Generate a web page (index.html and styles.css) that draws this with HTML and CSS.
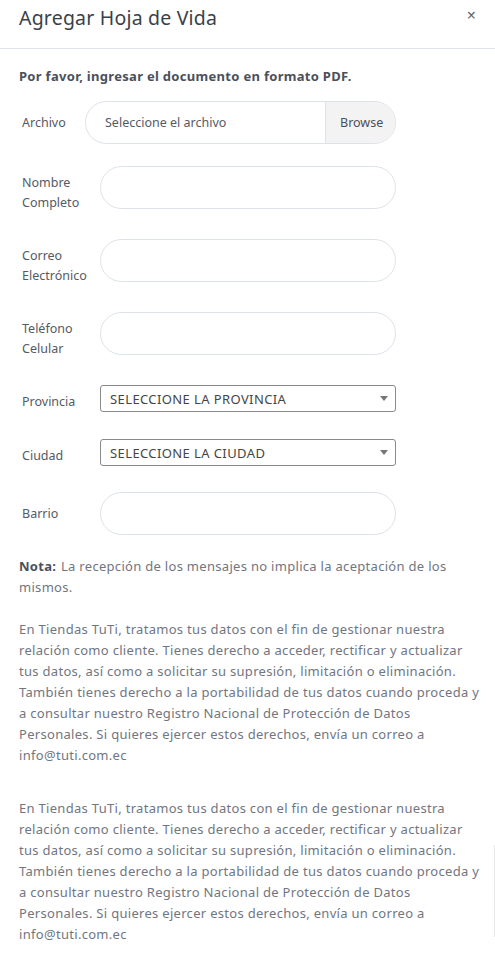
FILE: index.html
```html
<!DOCTYPE html>
<html lang="es">
<head>
<meta charset="utf-8">
<title>Agregar Hoja de Vida</title>
<link rel="stylesheet" href="styles.css">
</head>
<body>
<div class="modal">
  <div class="modal-header">
    <h1 class="modal-title">Agregar Hoja de Vida</h1>
    <span class="close">×</span>
  </div>
  <div class="modal-body">
    <p class="intro">Por favor, ingresar el documento en formato PDF.</p>

    <div class="row row-file">
      <label class="lbl lbl-file">Archivo</label>
      <div class="file-group">
        <span class="file-text">Seleccione el archivo</span>
        <span class="file-btn">Browse</span>
      </div>
    </div>

    <div class="row">
      <label class="lbl lbl-2">Nombre<br>Completo</label>
      <div class="pill"></div>
    </div>

    <div class="row">
      <label class="lbl lbl-2">Correo<br>Electrónico</label>
      <div class="pill"></div>
    </div>

    <div class="row">
      <label class="lbl lbl-2">Teléfono<br>Celular</label>
      <div class="pill"></div>
    </div>

    <div class="row row-select">
      <label class="lbl lbl-sel">Provincia</label>
      <div class="select"><span>SELECCIONE LA PROVINCIA</span><span class="caret"></span></div>
    </div>

    <div class="row row-select row-select-last">
      <label class="lbl lbl-sel">Ciudad</label>
      <div class="select"><span>SELECCIONE LA CIUDAD</span><span class="caret"></span></div>
    </div>

    <div class="row row-last">
      <label class="lbl">Barrio</label>
      <div class="pill"></div>
    </div>

    <p class="text nota"><strong class="nota-key">Nota:</strong> La recepción de los mensajes no implica la aceptación de los mismos.</p>

    <p class="text">En Tiendas TuTi, tratamos tus datos con el fin de gestionar nuestra relación como cliente. Tienes derecho a acceder, rectificar y actualizar tus datos, así como a solicitar su supresión, limitación o eliminación. También tienes derecho a la portabilidad de tus datos cuando proceda y a consultar nuestro Registro Nacional de Protección de Datos Personales. Si quieres ejercer estos derechos, envía un correo a info@tuti.com.ec</p>

    <p class="text text-second">En Tiendas TuTi, tratamos tus datos con el fin de gestionar nuestra relación como cliente. Tienes derecho a acceder, rectificar y actualizar tus datos, así como a solicitar su supresión, limitación o eliminación. También tienes derecho a la portabilidad de tus datos cuando proceda y a consultar nuestro Registro Nacional de Protección de Datos Personales. Si quieres ejercer estos derechos, envía un correo a info@tuti.com.ec</p>
  </div>
  <div class="edge"></div>
</div>
</body>
</html>
```
FILE: styles.css
```css
* { box-sizing: border-box; }
html, body { margin: 0; padding: 0; background: #fff; }
body {
  font-family: "Noto Sans", "Open Sans", sans-serif;
  color: #5a5f69;
  width: 495px;
  overflow: hidden;
}
.modal { position: relative; }
.modal-header {
  height: 49px;
  border-bottom: 1px solid #dfe3ea;
  display: flex;
  align-items: flex-start;
  justify-content: space-between;
  padding: 5px 19px 0 19px;
}
.modal-title {
  margin: 0;
  font-size: 19.5px;
  font-weight: 400;
  color: #3a3f4a;
  letter-spacing: 0.2px;
  line-height: 26px;
}
.close {
  font-size: 16px;
  color: #5f6570;
  line-height: 20px;
}
.modal-body { padding: 17px 15px 0 19px; }
.intro {
  margin: 0 0 15px 0;
  font-size: 13px;
  font-weight: 700;
  color: #4b505b;
  line-height: 20px;
  letter-spacing: 0.3px;
}
.row {
  display: flex;
  align-items: center;
  margin-bottom: 30px;
}
.row-file { margin-bottom: 22px; }
.row-select { margin-bottom: 27px; }
.row-select-last { margin-bottom: 26px; }
.row-last { margin-bottom: 21px; }
.lbl {
  width: 81px;
  padding-left: 3px;
  font-size: 12.5px;
  line-height: 20px;
  color: #555a64;
  flex: none;
}
.lbl-2 { padding-top: 5px; margin-bottom: -5px; }
.lbl-sel { padding-top: 3px; margin-bottom: -3px; }
.lbl-file { width: 66px; }
.file-group {
  width: 311px;
  height: 43px;
  border: 1px solid #dde2ea;
  border-radius: 22px;
  display: flex;
  align-items: center;
  overflow: hidden;
}
.file-text {
  flex: 1;
  padding-left: 19px;
  font-size: 12.5px;
  color: #555a64;
}
.file-btn {
  width: 70px;
  height: 100%;
  background: #f3f3f4;
  border-left: 1px solid #dde2ea;
  display: flex;
  align-items: center;
  padding-left: 14px;
  font-size: 12.5px;
  color: #4b505b;
}
.pill {
  width: 296px;
  height: 43px;
  border: 1px solid #dde2ea;
  border-radius: 22px;
  background: #fff;
}
.select {
  width: 296px;
  height: 27px;
  border: 1px solid #8a8a8a;
  border-radius: 3px;
  display: flex;
  align-items: center;
  justify-content: space-between;
  padding: 0 7px 0 9px;
  font-size: 13px;
  letter-spacing: 0.4px;
  color: #454545;
}
.caret {
  width: 0; height: 0;
  border-left: 4px solid transparent;
  border-right: 4px solid transparent;
  border-top: 5px solid #777;
}
.text {
  margin: 0 0 21px 0;
  font-size: 13px;
  letter-spacing: 0.3px;
  line-height: 21px;
  color: #71767f;
}
.nota { margin-top: 0; }
.nota-key {
  color: #4b505b;
  font-weight: 700;
  display: inline-block;
  margin-right: 1px;
}
.text-second { margin-top: 32px; }
.edge {
  position: absolute;
  right: 0;
  top: 845px;
  width: 1px;
  height: 92px;
  background: #e8e8e8;
}
```
